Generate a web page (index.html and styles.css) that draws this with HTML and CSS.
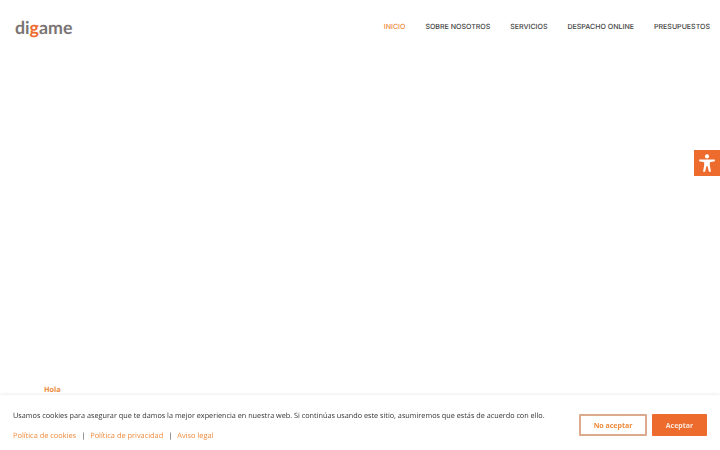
FILE: index.html
```html
<!DOCTYPE html>
<html lang="es">
  <head>
    <meta charset="UTF-8" />
    <meta name="viewport" content="width=device-width, initial-scale=1.0" />
    <title>Digame</title>
    <link rel="stylesheet" href="styles.css">
  </head>
  <body>
    <!-- Header -->
    <header class="site-header">
      <a class="logo" href="#">di<span class="logo-g">g</span>ame</a>
      <nav class="navbar" aria-label="Main Navigation">
        <a class="nav-link active" href="#">INICIO</a>
        <a class="nav-link" href="#">SOBRE NOSOTROS</a>
        <a class="nav-link" href="#">SERVICIOS</a>
        <a class="nav-link" href="#">DESPACHO ONLINE</a>
        <a class="nav-link" href="#">PRESUPUESTOS</a>
      </nav>
    </header>

    <main class="content">
      <p class="hello">Hola</p>
    </main>

    <!-- Accessibility button -->
    <a class="a11y-btn" href="#" aria-label="Accesibilidad">
      <svg viewBox="0 0 24 24" width="18" height="18" fill="#fff">
        <circle cx="12" cy="3.2" r="2.8" />
        <path d="M1.500 7.200h21v2.500l-6.700 1.200v4.300l1.500 8.300h-2.700L12.600 16h-1.200l-2 7.500H6.700l1.500-8.300v-4.300L1.500 9.700z" />
      </svg>
    </a>

    <!-- Cookie notice -->
    <section class="cookie-bar">
      <div class="cookie-text">
        <p class="cookie-msg">Usamos cookies para asegurar que te damos la mejor experiencia en nuestra web. Si continúas usando este sitio, asumiremos que estás de acuerdo con ello.</p>
        <p class="cookie-links">
          <a href="#">Política de cookies</a>
          <span class="sep">|</span>
          <a href="#">Política de privacidad</a>
          <span class="sep">|</span>
          <a href="#">Aviso legal</a>
        </p>
      </div>
      <div class="cookie-actions">
        <button class="btn btn-outline">No aceptar</button>
        <button class="btn btn-solid">Aceptar</button>
      </div>
    </section>
  </body>
</html>
```

FILE: styles.css
```css
:root {
  --orange: #ee8a3c;
  --orange-dark: #ec6b2d;
  --grey: #7a7474;
  --text: #333;
}
* {
  box-sizing: border-box;
}
html, body {
  height: 100%;
}
body {
  margin: 0;
  background: #fff;
  color: var(--text);
  font-family: 'Open Sans', sans-serif;
  text-rendering: geometricPrecision;
  overflow: hidden;
}
a {
  text-decoration: none;
  color: inherit;
}
/* Header */
.site-header {
  display: flex;
  justify-content: space-between;
  align-items: center;
  height: 53px;
  padding: 0 10px 0 15px;
}
.logo {
  font-family: 'Lato', sans-serif;
  font-size: 17.8px;
  font-weight: 700;
  color: var(--grey);
}
.logo-g {
  color: var(--orange-dark);
}
.navbar {
  display: flex;
  gap: 20px;
}
.nav-link {
  font-family: 'Inter', sans-serif;
  font-size: 7.05px;
  font-weight: 500;
  color: #444;
}
.nav-link.active {
  color: var(--orange);
}
/* Main */
.content {
  padding: 332px 44px 0;
}
.hello {
  margin: 0;
  font-size: 7.3px;
  font-weight: 700;
  line-height: 10px;
  color: var(--orange);
}
/* Accessibility button */
.a11y-btn {
  position: fixed;
  top: 150px;
  right: 0;
  display: flex;
  align-items: center;
  justify-content: center;
  width: 26px;
  height: 26px;
  background: var(--orange-dark);
}
/* Cookie bar */
.cookie-bar {
  position: fixed;
  left: 0;
  right: 0;
  bottom: 0;
  height: 55px;
  display: flex;
  align-items: center;
  justify-content: space-between;
  padding: 5px 13px 0;
  background: #fff;
  box-shadow: 0 0 4px rgba(0, 0, 0, 0.12);
}
.cookie-text {
  padding-top: 1px;
}
.cookie-text p {
  margin: 0;
  font-size: 7.27px;
  line-height: 10px;
  white-space: nowrap;
}
.cookie-msg {
  color: var(--text);
  padding-bottom: 10px;
}
.cookie-text .cookie-links {
  display: flex;
  gap: 5px;
  font-size: 7.4px;
  color: var(--orange);
}
.sep {
  color: var(--text);
}
.cookie-actions {
  display: flex;
  gap: 5px;
}
.btn {
  height: 22px;
  font-family: 'Open Sans', sans-serif;
  font-size: 7px;
  font-weight: 700;
  border-radius: 1px;
  cursor: pointer;
}
.btn-outline {
  width: 68px;
  background: #fff;
  color: var(--orange);
  border: 2px solid #dba98c;
}
.btn-solid {
  width: 55px;
  background: var(--orange-dark);
  color: #fbe6d8;
  border: none;
}
```
